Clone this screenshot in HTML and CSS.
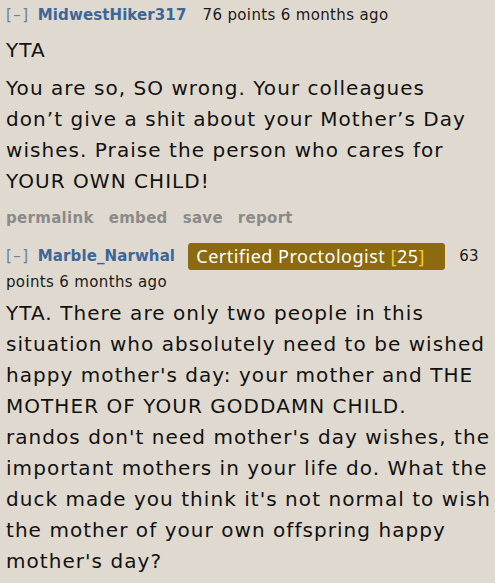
FILE: index.html
```html
<!DOCTYPE html>
<html>
<head>
<meta charset="utf-8">
<link rel="stylesheet" href="styles.css">
</head>
<body>
<div class="thread">
  <div class="comment">
    <div class="tagline">
      <span class="expand">[–]</span>
      <a class="author">MidwestHiker317</a>
      <span class="score">76 points</span> <span class="time">6 months ago</span>
    </div>
    <div class="md">
      <p>YTA</p>
      <p>You are so, SO wrong. Your colleagues<br>don’t give a shit about your Mother’s Day<br>wishes. Praise the person who cares for<br>YOUR OWN CHILD!</p>
    </div>
    <ul class="buttons">
      <li>permalink</li>
      <li>embed</li>
      <li>save</li>
      <li>report</li>
    </ul>
  </div>
  <div class="comment second">
    <div class="tagline">
      <span class="expand">[–]</span>
      <a class="author">Marble_Narwhal</a>
      <span class="flair">Certified Proctologist <span class="br">[</span>25<span class="br">]</span></span>
      <span class="score">63</span> <span class="points">points</span> <span class="time">6 months ago</span>
    </div>
    <div class="md">
      <p>YTA. There are only two people in this<br>situation who absolutely need to be wished<br>happy mother's day: your mother and THE<br>MOTHER OF YOUR GODDAMN CHILD.<br>randos don't need mother's day wishes, the<br>important mothers in your life do. What the<br>duck made you think it's not normal to wish<br>the mother of your own offspring happy<br>mother's day?</p>
    </div>
  </div>
</div>
</body>
</html>
```
FILE: styles.css
```css
html, body {
  margin: 0;
  padding: 0;
  background: #e0d9cf;
}
body {
  font-family: "DejaVu Sans", Verdana, sans-serif;
  color: #111;
  width: 495px;
  height: 583px;
  overflow: hidden;
}
.thread {
  padding: 3px 0 0 6px;
}
.tagline {
  font-size: 15px;
  line-height: 25px;
  color: #1a1a1a;
  letter-spacing: 0.35px;
  padding-right: 4px;
}
.expand {
  color: #6f7f96;
  margin-right: 3px;
  letter-spacing: 1.5px;
}
.author {
  color: #3d6698;
  font-weight: bold;
  margin-right: 1px;
  letter-spacing: 0.1px;
}
.score {
  margin-left: 10px;
}
.md {
  font-size: 20px;
  line-height: 31px;
  letter-spacing: 1.05px;
  white-space: nowrap;
}
.md p {
  margin: 7px 0 0 0;
}
.buttons {
  list-style: none;
  margin: 11px 0 0 0;
  padding: 0;
  display: flex;
  gap: 15px;
  font-size: 15px;
  line-height: 20px;
  font-weight: bold;
  color: #8a8a8a;
  letter-spacing: 0.3px;
}
.second {
  margin-top: 15px;
}
.second .md p {
  margin-top: 3px;
}
.second .score {
  margin-left: 9px;
}
.flair {
  display: inline-block;
  background: #8c6b10;
  color: #fff;
  font-family: "Noto Sans", "Open Sans", sans-serif;
  font-size: 18px;
  line-height: 25px;
  padding: 1px 20px 1px 8px;
  margin-left: 7px;
  letter-spacing: 0.5px;
  border-radius: 3px;
  vertical-align: middle;
}
.flair .br {
  color: #f2cc2a;
}
```
